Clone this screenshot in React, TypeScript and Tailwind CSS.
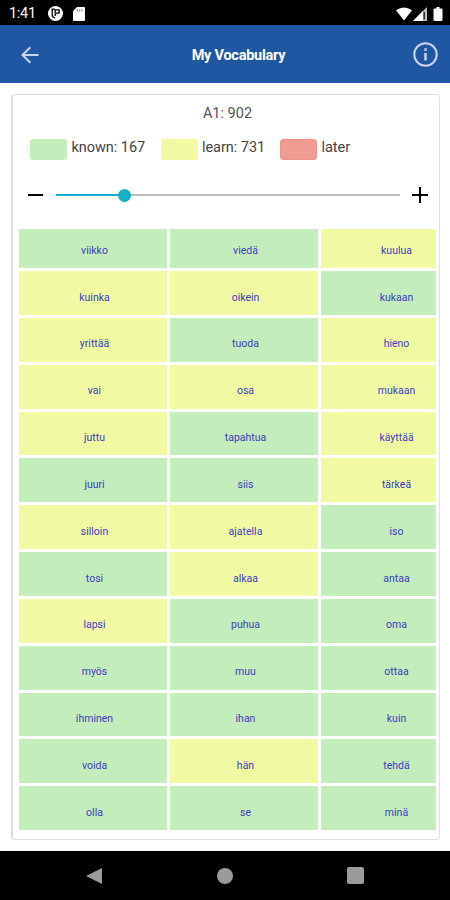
const words = [
  ["viikko", "viedä", "kuulua"],
  ["kuinka", "oikein", "kukaan"],
  ["yrittää", "tuoda", "hieno"],
  ["vai", "osa", "mukaan"],
  ["juttu", "tapahtua", "käyttää"],
  ["juuri", "siis", "tärkeä"],
  ["silloin", "ajatella", "iso"],
  ["tosi", "alkaa", "antaa"],
  ["lapsi", "puhua", "oma"],
  ["myös", "muu", "ottaa"],
  ["ihminen", "ihan", "kuin"],
  ["voida", "hän", "tehdä"],
  ["olla", "se", "minä"],
];

const learning = [
  "kuulua", "kuinka", "oikein", "yrittää", "hieno", "vai", "osa", "mukaan",
  "juttu", "käyttää", "tärkeä", "silloin", "ajatella", "alkaa", "lapsi", "hän",
];

function StatusBar() {
  return (
    <div className="flex h-[25px] shrink-0 items-center bg-black pl-[9px] pr-[6px] pt-[2px] text-white">
      <span className="w-[39px] pt-px text-[14.5px] leading-none tracking-[-0.3px]">1:41</span>
      <svg className="h-[15px] w-[15px]" viewBox="0 0 15 15">
        <circle cx="7.5" cy="7.5" r="7.5" fill="#fff" />
        <path d="M6.8 3.1H4.2v5.4q0 3 2.8 3.4M7.2 10V3.8h3.9v3.4H8" fill="none" stroke="#000" strokeWidth="1.3" />
      </svg>
      <svg className="ml-[10px] h-[14px] w-[12px]" viewBox="0 0 12 14">
        <path d="M4 0h7q1 0 1 1v12q0 1-1 1H1q-1 0-1-1V4z" fill="#fff" />
        <path d="M4.5 2v2.6M6.7 2v2.6M8.9 2v2.6" stroke="#888" strokeWidth="1" />
      </svg>
      <svg className="ml-auto h-[14px] w-[48px]" viewBox="0 0 48 14">
        <path d="M0 3.2q8-5.6 16 0L8 13.5z" fill="#fff" />
        <path d="M31 0v14H17z" fill="#bbb" />
        <path d="M27 4v10H17z" fill="#fff" />
        <path d="M28.2 5v7.5" stroke="#222" strokeWidth="1.4" />
        <path d="M40.5 1.5V0h3v1.5h2q1 0 1 1V13q0 1-1 1h-7q-1 0-1-1V2.5q0-1 1-1z" fill="#fff" />
      </svg>
    </div>
  );
}

function Header() {
  return (
    <header className="flex h-[58px] shrink-0 items-center justify-between bg-[#2057a2] pl-[21px] pr-[12px]">
      <svg className="mt-px h-[18px] w-[18px]" viewBox="0 0 18 18" fill="none" stroke="#ccd5ea" strokeWidth="2">
        <path d="M17.5 9H2M9.3 1.2L1.5 9l7.8 7.8" />
      </svg>
      <h1 className="ml-[25px] mt-[3px] text-[14.5px] font-bold tracking-[-0.24px] text-white">My Vocabulary</h1>
      <svg className="h-[25px] w-[25px]" viewBox="0 0 25 25" fill="none" stroke="#ccd5ea" strokeWidth="2">
        <circle cx="12.5" cy="12.5" r="11.2" />
        <path d="M12.5 11v7.5M12.5 6.2v2.6" strokeWidth="2.5" />
      </svg>
    </header>
  );
}

function Legend() {
  return (
    <div className="mt-[16px] flex h-[22px] pl-[17px] text-[14.5px] leading-[18px] tracking-[-0.05px] text-[#444]">
      <div className="flex w-[130.5px]">
        <div className="mr-[4.5px] h-[21px] w-[37px] rounded-[3px] bg-[#c3edbb]" />
        known: 167
      </div>
      <div className="flex w-[119.5px]">
        <div className="mr-[4.5px] h-[21px] w-[37px] rounded-[3px] bg-[#f1faa0]" />
        learn: 731
      </div>
      <div className="flex">
        <div className="mr-[4.5px] h-[21px] w-[37px] rounded-[3px] border border-[#f09389] bg-[#ef9d92]" />
        later
      </div>
    </div>
  );
}

function LevelSlider() {
  return (
    <div className="mt-[25px] flex h-[18px] items-center pl-[15px] pr-[11px]">
      <div className="h-[2px] w-[15px] bg-black" />
      <div className="relative ml-[13px] flex h-[2px] flex-1 bg-[#bdbdbd]">
        <div className="h-full w-[68px] bg-[#14b0c8]" />
        <div className="absolute left-[62px] top-[-5.5px] h-[13px] w-[13px] rounded-full bg-[#14b0c8]" />
      </div>
      <svg className="ml-[12px] h-[16px] w-[16px]" viewBox="0 0 16 16" stroke="#000" strokeWidth="2">
        <path d="M8 0v16M0 8h16" />
      </svg>
    </div>
  );
}

export default function App() {
  return (
    <div className="flex h-[900px] w-[450px] flex-col overflow-hidden bg-white font-[Roboto,sans-serif]">
      <StatusBar />
      <Header />
      <main className="flex-1 px-[11px] pt-[11px]">
        <section className="h-[746px] w-[429px] rounded-[4px] border-[1.5px] border-l-2 border-[#dedede]">
          <p className="mt-[10px] pl-[3px] text-center text-[14.5px] leading-[18px] text-[#555]">A1: 902</p>
          <Legend />
          <LevelSlider />
          <div className="ml-[6px] mt-[25px] flex h-[601px] w-[417px] flex-col justify-end overflow-hidden">
            <div className="grid auto-rows-[43.84px] grid-cols-[148px_148px_148px] gap-[3px]">
              {words.flat().map((word) => (
                <div
                  key={word}
                  className={`flex items-center justify-center pl-[3px] pt-[9px] text-[10.5px] text-[#403cc0] ${
                    learning.includes(word) ? "bg-[#f1faa3]" : "bg-[#c3edbb]"
                  }`}
                >
                  {word}
                </div>
              ))}
            </div>
          </div>
        </section>
      </main>
      <nav className="flex h-[49px] shrink-0 items-center justify-between bg-black pl-[86px] pr-[86px]">
        <svg className="h-[18px] w-[16px]" viewBox="0 0 16 18">
          <path d="M16 1v16L0 9z" fill="#9b9b9b" />
        </svg>
        <div className="h-[16px] w-[16px] rounded-full bg-[#9b9b9b]" />
        <div className="h-[17px] w-[17px] rounded-[2px] bg-[#9b9b9b]" />
      </nav>
    </div>
  );
}
